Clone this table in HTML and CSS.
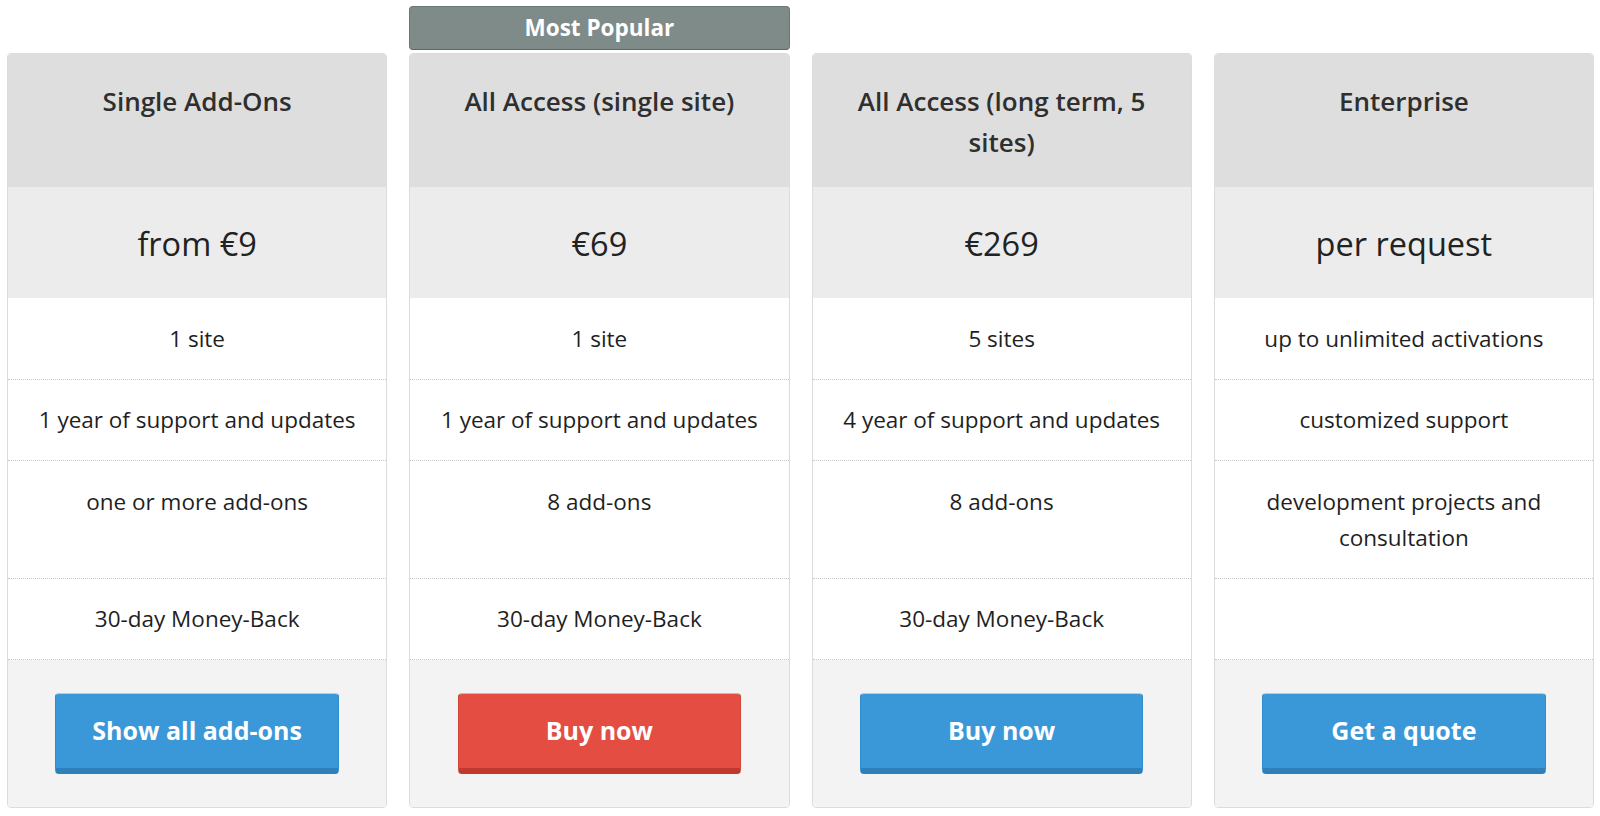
FILE: index.html
```html
<!DOCTYPE html>
<html lang="en">
<head>
<meta charset="utf-8">
<title>Pricing</title>
<link rel="stylesheet" href="styles.css">
</head>
<body>
<div class="pricing">
  <div class="plan">
    <div class="plan-head"><h3 class="plan-title">Single Add-Ons</h3></div>
    <div class="plan-price">from €9</div>
    <div class="plan-feat">1 site</div>
    <div class="plan-feat">1 year of support and updates</div>
    <div class="plan-feat">one or more add-ons</div>
    <div class="plan-feat">30-day Money-Back</div>
    <div class="plan-foot"><a class="btn btn-blue" href="#">Show all add-ons</a></div>
  </div>
  <div class="plan plan-popular">
    <div class="plan-badge">Most Popular</div>
    <div class="plan-head"><h3 class="plan-title">All Access (single site)</h3></div>
    <div class="plan-price">€69</div>
    <div class="plan-feat">1 site</div>
    <div class="plan-feat">1 year of support and updates</div>
    <div class="plan-feat">8 add-ons</div>
    <div class="plan-feat">30-day Money-Back</div>
    <div class="plan-foot"><a class="btn btn-red" href="#">Buy now</a></div>
  </div>
  <div class="plan">
    <div class="plan-head"><h3 class="plan-title">All Access (long term, 5 sites)</h3></div>
    <div class="plan-price">€269</div>
    <div class="plan-feat">5 sites</div>
    <div class="plan-feat">4 year of support and updates</div>
    <div class="plan-feat">8 add-ons</div>
    <div class="plan-feat">30-day Money-Back</div>
    <div class="plan-foot"><a class="btn btn-blue" href="#">Buy now</a></div>
  </div>
  <div class="plan">
    <div class="plan-head"><h3 class="plan-title">Enterprise</h3></div>
    <div class="plan-price">per request</div>
    <div class="plan-feat">up to unlimited activations</div>
    <div class="plan-feat">customized support</div>
    <div class="plan-feat">development projects and consultation</div>
    <div class="plan-feat"></div>
    <div class="plan-foot"><a class="btn btn-blue" href="#">Get a quote</a></div>
  </div>
</div>
</body>
</html>
```
FILE: styles.css
```css
* { box-sizing: border-box; }
html, body { margin: 0; padding: 0; background: #fff; }
body {
  font-family: "Open Sans", "Noto Sans", sans-serif;
  color: #222;
}
.pricing {
  display: grid;
  grid-template-columns: repeat(4, 1fr);
  grid-template-rows: repeat(7, auto);
  column-gap: 22px;
  padding: 53px 6px 0 7px;
}
.plan {
  position: relative;
  display: grid;
  grid-row: span 7;
  grid-template-rows: subgrid;
  border: 1px solid #dcdcdc;
  border-radius: 4px;
  text-align: center;
}
.plan-badge {
  position: absolute;
  left: -1px;
  right: -1px;
  top: -48px;
  height: 44px;
  background: #7f8b88;
  border: 1px solid #6c7775;
  border-bottom-color: #5d6765;
  border-radius: 4px;
  color: #fff;
  font-weight: 700;
  font-size: 22.5px;
  line-height: 41px;
}
.plan-head {
  background: #dedede;
  padding: 27px 16px 24px;
  border-radius: 3px 3px 0 0;
}
.plan-title {
  margin: 0;
  font-size: 26px;
  font-weight: 600;
  line-height: 41px;
  color: #2f2f2f;
}
.plan-price {
  background: #ececec;
  padding: 34px 10px 32px;
  font-size: 32.5px;
  line-height: 45px;
  color: #222;
}
.plan-feat {
  background: #fff;
  padding: 22.5px 14px 22px;
  font-size: 22.5px;
  line-height: 36px;
  border-bottom: 1px dotted #c8c8c8;
  color: #1f1f1f;
}
.plan-foot {
  background: #f3f3f3;
  padding: 33px 0;
  border-radius: 0 0 3px 3px;
}
.btn {
  display: block;
  width: 75%;
  margin: 0 auto;
  padding: 18.5px 0 20px;
  line-height: 35px;
  font-size: 25px;
  font-weight: 700;
  color: #fff;
  text-decoration: none;
  border-radius: 4px;
  border: 1px solid;
  border-bottom-width: 6px;
}
.btn-blue {
  background: #3a98d8;
  border-color: #c4c9cc #2f8bcc #2e80ba;
}
.btn-red {
  background: #e34d42;
  border-color: #bdbdbd #d0443a #c1392d;
}
```
